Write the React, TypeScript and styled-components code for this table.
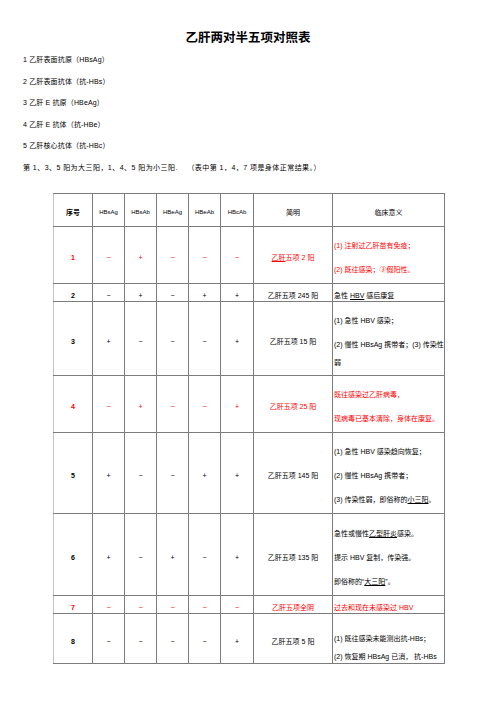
import React from "react";
import styled, { createGlobalStyle } from "styled-components";

const Global = createGlobalStyle`
  html, body { margin: 0; padding: 0; background: #fff; }
  body { font-family: "Liberation Sans", "Noto Sans CJK SC", sans-serif; color: #000; }
`;

const Page = styled.div`
  width: 496px;
  height: 702px;
  padding-top: 27px;
  box-sizing: border-box;
  overflow: hidden;
`;

const Title = styled.h1`
  margin: 0;
  text-align: center;
  font-size: 12.5px;
  line-height: 20px;
  font-weight: 700;
  letter-spacing: 0;
  font-family: "Noto Sans CJK SC", sans-serif;
`;

const Intro = styled.div`
  margin-top: 2px;
  padding-left: 23px;
  font-size: 7px;
  line-height: 21.6px;
  letter-spacing: 0.15px;
`;

const IntroLine = styled.p<{ $wide?: boolean }>`
  margin: 0;
  white-space: pre;
  letter-spacing: ${(p) => (p.$wide ? "0.45px" : "inherit")};
`;

const Table = styled.table`
  margin: 14px 0 0 53px;
  border-collapse: collapse;
  table-layout: fixed;
  width: 392px;
  font-size: 7px;
`;

const Cell = styled.td<{ $red?: boolean; $bold?: boolean; $left?: boolean; $bottom?: boolean; $first?: boolean }>`
  border: 1px solid #7c7c7c;
  ${(p) => (p.$first ? "border-left-color: #c4c4c4;" : "")}
  padding: ${(p) => (p.$bottom ? "0 1px 1px" : "6px 1px 0")};
  line-height: 11px;
  vertical-align: ${(p) => (p.$bottom ? "bottom" : "middle")};
  text-align: ${(p) => (p.$left ? "left" : "center")};
  white-space: nowrap;
  overflow: hidden;
  color: ${(p) => (p.$red ? "#ff0000" : "#000")};
  font-weight: ${(p) => (p.$bold ? 700 : 400)};
`;

const HeadCell = styled(Cell)<{ $small?: boolean }>`
  font-size: ${(p) => (p.$small ? "6px" : "7px")};
`;

const Row = styled.tr<{ $h: number }>`
  height: ${(p) => p.$h}px;
`;

const Line = styled.span<{ $gap?: number }>`
  display: block;
  margin-top: ${(p) => p.$gap ?? 0}px;
`;

const U = styled.span`
  text-decoration: underline;
  text-underline-offset: 1px;
`;

type Data = {
  n: string;
  red?: boolean;
  signs: string[];
  short: React.ReactNode;
  lines: { t: React.ReactNode; gap?: number }[];
  h: number;
  bottom?: boolean;
};

const P = 13;
const W = 7;

const rows: Data[] = [
  {
    n: "1",
    red: true,
    signs: ["−", "+", "−", "−", "−"],
    short: (
      <>
        <U>乙肝</U>五项 2 阳
      </>
    ),
    lines: [{ t: "(1) 注射过乙肝苗有免疫；" }, { t: "(2) 既往感染；③假阳性。", gap: P }],
    h: 57,
  },
  {
    n: "2",
    signs: ["−", "+", "−", "+", "+"],
    short: "乙肝五项 245 阳",
    lines: [
      {
        t: (
          <>
            急性 <U>HBV</U> 感后康复
          </>
        ),
      },
    ],
    h: 18,
  },
  {
    n: "3",
    signs: ["+", "−", "−", "−", "+"],
    short: "乙肝五项 15 阳",
    lines: [
      { t: "(1) 急性 HBV 感染；" },
      { t: "(2) 慢性 HBsAg 携带者；(3) 传染性", gap: P },
      { t: "弱", gap: W },
    ],
    h: 74,
  },
  {
    n: "4",
    red: true,
    signs: ["−", "+", "−", "−", "+"],
    short: "乙肝五项 25 阳",
    lines: [{ t: "既往感染过乙肝病毒，" }, { t: "现病毒已基本清除，身体在康复。", gap: P }],
    h: 57,
  },
  {
    n: "5",
    signs: ["+", "−", "−", "+", "+"],
    short: "乙肝五项 145 阳",
    lines: [
      { t: "(1) 急性 HBV 感染趋向恢复；" },
      { t: "(2) 慢性 HBsAg 携带者；", gap: P },
      {
        t: (
          <>
            (3) 传染性弱，即俗称的<U>小三阳</U>。
          </>
        ),
        gap: P,
      },
    ],
    h: 81,
  },
  {
    n: "6",
    signs: ["+", "−", "+", "−", "+"],
    short: "乙肝五项 135 阳",
    lines: [
      {
        t: (
          <>
            急性或慢性<U>乙型肝炎</U>感染。
          </>
        ),
      },
      { t: "提示 HBV 复制，传染强。", gap: P },
      {
        t: (
          <>
            即俗称的“<U>大三阳</U>”。
          </>
        ),
        gap: P,
      },
    ],
    h: 82,
  },
  {
    n: "7",
    red: true,
    signs: ["−", "−", "−", "−", "−"],
    short: "乙肝五项全阴",
    lines: [{ t: "过去和现在未感染过 HBV" }],
    h: 17,
  },
  {
    n: "8",
    signs: ["−", "−", "−", "−", "+"],
    short: "乙肝五项 5 阳",
    lines: [{ t: "(1) 既往感染未能测出抗-HBs；" }, { t: "(2) 恢复期 HBsAg 已消， 抗-HBs", gap: W }],
    h: 50,
    bottom: true,
  },
];

const widths = [39, 32, 32, 32, 32, 33, 79, 112];
const heads = ["HBsAg", "HBsAb", "HBeAg", "HBeAb", "HBcAb"];

export default function App() {
  return (
    <Page>
      <Global />
      <Title>乙肝两对半五项对照表</Title>
      <Intro>
        <IntroLine>1 乙肝表面抗原（HBsAg）</IntroLine>
        <IntroLine>2 乙肝表面抗体（抗-HBs）</IntroLine>
        <IntroLine>3 乙肝 E 抗原（HBeAg）</IntroLine>
        <IntroLine>4 乙肝 E 抗体（抗-HBe）</IntroLine>
        <IntroLine>5 乙肝核心抗体（抗-HBc）</IntroLine>
        <IntroLine $wide>第 1、3、5 阳为大三阳，1、4、5 阳为小三阳.    （表中第 1，4，7 项是身体正常结果。）</IntroLine>
      </Intro>
      <Table>
        <colgroup>
          {widths.map((w, i) => (
            <col key={i} style={{ width: w }} />
          ))}
        </colgroup>
        <tbody>
          <Row $h={33}>
            <HeadCell $bold $first>
              序号
            </HeadCell>
            {heads.map((h) => (
              <HeadCell key={h} $small>
                {h}
              </HeadCell>
            ))}
            <HeadCell>简明</HeadCell>
            <HeadCell>临床意义</HeadCell>
          </Row>
          {rows.map((r) => (
            <Row key={r.n} $h={r.h}>
              <Cell $bold $red={r.red} $first>
                {r.n}
              </Cell>
              {r.signs.map((s, i) => (
                <Cell key={i} $red={r.red}>
                  {s}
                </Cell>
              ))}
              <Cell $red={r.red}>{r.short}</Cell>
              <Cell $left $red={r.red} $bottom={r.bottom}>
                {r.lines.map((l, i) => (
                  <Line key={i} $gap={l.gap}>
                    {l.t}
                  </Line>
                ))}
              </Cell>
            </Row>
          ))}
        </tbody>
      </Table>
    </Page>
  );
}
